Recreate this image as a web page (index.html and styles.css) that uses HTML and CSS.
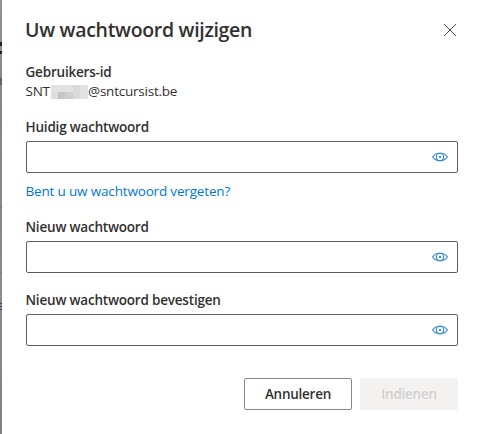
FILE: index.html
```html
<!DOCTYPE html>
<html lang="nl">
<head>
<meta charset="utf-8">
<title>Uw wachtwoord wijzigen</title>
<link rel="stylesheet" href="styles.css">
</head>
<body>
<svg width="0" height="0" class="defs" aria-hidden="true">
  <symbol id="eye" viewBox="0 0 16 12">
    <path d="M.6 6C2.400 3.300 5 2.300 8 2.300s5.600 1 7.400 3.700C13.600 8.700 11 9.700 8 9.700S2.400 8.700.6 6z"/>
    <circle cx="8" cy="6" r="3.700"/>
    <circle class="pupil" cx="8" cy="6" r="1"/>
  </symbol>
</svg>
<div class="overlay">
  <div class="backdrop">
    <i class="sliver heading"></i>
    <i class="sliver text"></i>
    <i class="sliver rule"></i>
    <i class="sliver rule second"></i>
    <i class="sliver rule third"></i>
    <i class="sliver link-mark"></i>
  </div>
  <main class="dialog">
    <header class="header">
      <h1>Uw wachtwoord wijzigen</h1>
      <button class="close" aria-label="Sluiten"><svg width="14" height="14" viewBox="0 0 14 14"><path d="M1 1l12 12M13 1L1 13"/></svg></button>
    </header>
    <section class="user">
      <div class="label">Gebruikers-id</div>
      <div class="account"><span>SNT</span><span class="mosaic"><i></i><i></i><i></i><i></i><i></i><i></i><i></i><i></i><i></i><i></i></span><span>@sntcursist.be</span></div>
    </section>
    <section class="field current">
      <label class="label" for="p1">Huidig wachtwoord</label>
      <div class="box"><input id="p1" type="password"><svg class="eye"><use href="#eye"/></svg></div>
      <a class="forgot">Bent u uw wachtwoord vergeten?</a>
    </section>
    <section class="field">
      <label class="label" for="p2">Nieuw wachtwoord</label>
      <div class="box"><input id="p2" type="password"><svg class="eye"><use href="#eye"/></svg></div>
    </section>
    <section class="field">
      <label class="label" for="p3">Nieuw wachtwoord bevestigen</label>
      <div class="box"><input id="p3" type="password"><svg class="eye"><use href="#eye"/></svg></div>
    </section>
    <footer class="actions">
      <button class="btn">Annuleren</button>
      <button class="btn submit" disabled>Indienen</button>
    </footer>
  </main>
</div>
</body>
</html>
```

FILE: styles.css
```css
* { box-sizing: border-box; }
body {
  margin: 0;
  font-family: "Open Sans", "Noto Sans", sans-serif;
  font-size: 13.5px;
  color: #323130;
  overflow: hidden;
}
.defs { position: absolute; }
.overlay { display: flex; height: 434px; }
.backdrop {
  position: relative;
  width: 2px;
  overflow: hidden;
  background: linear-gradient(#929292, #858585 25%, #8b8b8b 70%, #808080);
}
.sliver { position: absolute; left: 0; width: 2px; }
.heading { top: 42px; height: 12px; border-top: 4px solid #222; border-bottom: 3px solid #222; }
.text { top: 78px; height: 7px; background: #606060; }
.rule { top: 154px; height: 1px; background: #777; }
.rule.second { top: 207px; }
.rule.third { top: 272px; }
.link-mark { top: 303px; height: 7px; background: repeating-linear-gradient(#284f7c 0 1px, #8b8b8b 1px 3px); }
.dialog { flex: 1; padding: 16px 24px 24px; background: #fff; }
.header { display: flex; justify-content: space-between; height: 28px; }
h1 { margin: 0 0 0 -1px; font-size: 19.5px; line-height: 28px; font-weight: 600; letter-spacing: -.3px; white-space: nowrap; }
.close { width: 14px; height: 28px; margin-right: 1px; padding: 0; border: 0; background: none; }
.close svg { display: block; fill: none; stroke: #484644; stroke-width: 1; }
.user { margin-top: 18px; height: 55px; }
.label { display: block; height: 20px; line-height: 20px; font-weight: 600; letter-spacing: -.2px; white-space: nowrap; text-indent: -.5px; }
.account { display: flex; height: 19px; line-height: 19px; letter-spacing: -.23px; text-indent: -.5px; }
.mosaic { display: grid; grid-template-columns: repeat(5, 1fr); grid-template-rows: 7px 7px; width: 37px; margin: 3px 1px 0 .7px; }
.mosaic i { background: #e2e2e2; }
.mosaic i:nth-child(4), .mosaic i:nth-child(9) { background: #dadada; }
.mosaic i:nth-child(6) { background: #dedede; }
.mosaic i:nth-child(7) { background: #c5c5c5; }
.mosaic i:nth-child(8) { background: #cecece; }
.field { height: 73px; }
.field.current { height: 100px; }
.box { display: flex; align-items: center; height: 32px; margin-top: 4px; border: 1px solid #605e5c; border-radius: 2px; }
input { flex: 1; min-width: 0; height: 30px; border: 0; outline: 0; background: none; }
.eye { width: 16px; height: 12px; margin-right: 9px; fill: none; stroke: #2b88d8; stroke-width: 1.1; }
.pupil { fill: #0078d4; stroke: none; }
.forgot { display: block; margin-top: 8px; height: 20px; line-height: 20px; letter-spacing: -.17px; color: #0078d4; white-space: nowrap; text-indent: -.5px; }
.actions { display: flex; justify-content: flex-end; gap: 8px; margin-top: 15px; }
.btn { width: 108px; height: 32px; padding: 0; border: 1px solid #8a8886; border-radius: 2px; background: #fff; font: inherit; font-weight: 600; letter-spacing: -.25px; color: #323130; }
.btn.submit { width: 98px; border-color: #f3f2f1; background: #f3f2f1; color: #d2d0ce; }
```
